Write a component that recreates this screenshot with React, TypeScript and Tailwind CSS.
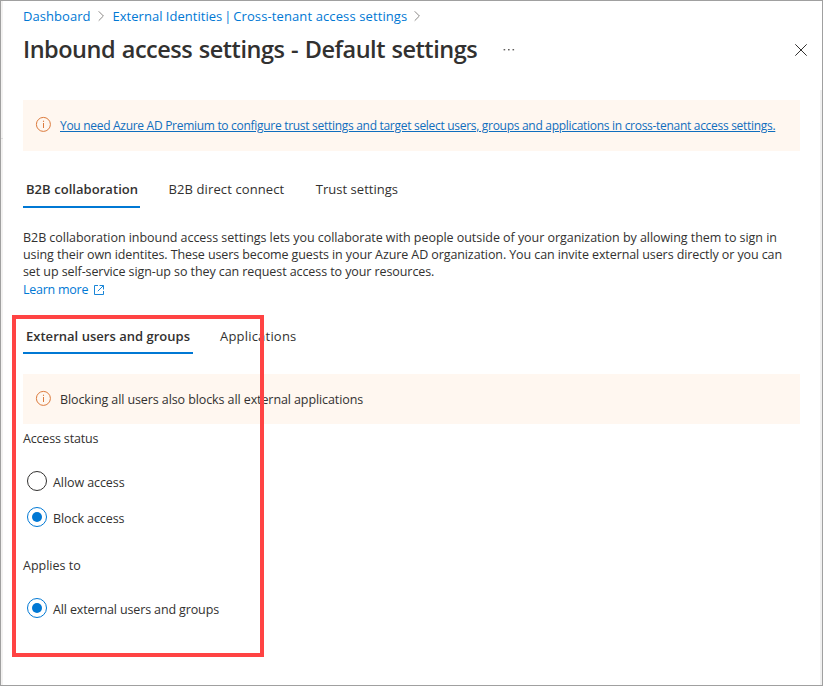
import type { ReactNode } from "react";

function Chevron({ className }: { className: string }) {
  return (
    <svg className={className} width="7" height="12" viewBox="0 0 7 12" fill="none" stroke="#8a8886" strokeWidth="1">
      <path d="M0.7 1.3 L5.4 6 L0.7 10.7" />
    </svg>
  );
}

function InfoIcon() {
  return (
    <svg className="ml-3 shrink-0" width="17" height="17" viewBox="0 0 17 17" fill="none">
      <circle cx="8.4" cy="8.4" r="7" stroke="#dc7a3c" strokeWidth="1" />
      <path d="M8.5 7 V12" stroke="#dc7a3c" strokeWidth="1" />
      <path d="M8.5 4.7 V5.9" stroke="#dc7a3c" strokeWidth="1.1" />
    </svg>
  );
}

function ExternalLinkIcon() {
  return (
    <svg className="ml-[6px]" width="10" height="10" viewBox="0 0 10 10" fill="none" stroke="#0078d4" strokeWidth="0.9">
      <path d="M4 0.5 H0.5 V9.5 H9.5 V6" />
      <path d="M5.5 0.5 H9.5 V4.5 M9.3 0.7 L3.8 6.2" />
    </svg>
  );
}

function Radio({ checked, children }: { checked?: boolean; children: ReactNode }) {
  return (
    <div className="ml-1 flex h-5 items-center">
      <span
        className={
          checked
            ? "flex size-5 items-center justify-center rounded-full border border-[#0078d4]"
            : "flex size-5 items-center justify-center rounded-full border border-[#323130]"
        }
      >
        {checked && <span className="size-[10px] rounded-full bg-[#0078d4]" />}
      </span>
      <span className="mt-1 ml-[6px] leading-[18px]">{children}</span>
    </div>
  );
}

export default function App() {
  return (
    <div className="relative flex h-[686px] w-[823px] border border-[#a0a0a0] bg-white font-['Open_Sans','Noto_Sans',sans-serif] text-[12.5px] whitespace-nowrap text-[#323130]">
      <div className="w-[2px] shrink-0 bg-[#f3f2f1] pt-[137px]">
        <div className="h-px bg-[#dcdcdc]" />
      </div>
      <div className="flex w-[817px] shrink-0 flex-col pt-[6px] pl-5">
        <nav className="flex h-[18px] items-center text-[13px] leading-[18px] text-[#0078d4]">
          <span className="tracking-[0.05px]">Dashboard</span>
          <Chevron className="ml-[7px]" />
          <span className="ml-2 tracking-[0.02px]">
            External Identities<span className="mr-[-1.5px] ml-[-1.5px]"> | </span>
            <span className="tracking-[0.11px]">Cross-tenant access settings</span>
          </span>
          <Chevron className="ml-[7px]" />
        </nav>

        <header className="mt-2 flex h-8 items-center">
          <h1 className="w-[479px] text-[23.5px] leading-8 font-semibold tracking-[-0.49px] [word-spacing:1px]">
            Inbound access settings - Default settings
          </h1>
          <svg className="mt-px" width="13" height="3" viewBox="0 0 13 3" fill="#605e5c">
            <rect x="1.6" y="1" width="1.6" height="1.4" />
            <rect x="6" y="1" width="1.6" height="1.4" />
            <rect x="10.5" y="1" width="1.6" height="1.4" />
          </svg>
          <svg className="mt-[2px] ml-[280px]" width="12" height="12" viewBox="0 0 12 12" stroke="#323130" strokeWidth="1">
            <path d="M0.3 0.3 L11.7 11.7 M11.7 0.3 L0.3 11.7" />
          </svg>
        </header>

        <div className="mt-[35px] flex h-[51px] w-[777px] items-start bg-[#fff7f0] pt-4">
          <InfoIcon />
          <a className="mt-px ml-2 text-[12px] leading-[18px] tracking-[-0.294px] text-[#106ebe] underline underline-offset-1">
            You need Azure AD Premium to configure trust settings and target select users, groups and applications in
            cross-tenant access settings.
          </a>
        </div>

        <div className="mt-[29px] flex h-7 text-[13px] leading-[18px]">
          <div className="w-[117px] border-b-2 border-[#0078d4] pl-[3px] font-semibold tracking-[0.05px]">
            B2B collaboration
          </div>
          <div className="ml-[28.5px] tracking-[0.11px]">B2B direct connect</div>
          <div className="ml-[31.5px] tracking-[0.02px]">Trust settings</div>
        </div>

        <div className="mt-[21px] leading-[17px]">
          <div className="tracking-[-0.047px]">
            B2B collaboration inbound access settings lets you collaborate with people outside of your organization by
            allowing them to sign in
          </div>
          <div className="tracking-[-0.097px]">
            using their own identites. These users become guests in your Azure AD organization. You can invite external
            users directly or you can
          </div>
          <div className="tracking-[-0.086px]">
            set up self-service sign-up so they can request access to your resources.
          </div>
        </div>
        <div className="mt-px flex h-[18px] items-center leading-[18px] text-[#0078d4]">
          <span className="tracking-[-0.25px]">Learn more</span>
          <ExternalLinkIcon />
        </div>

        <div className="mt-[28px] flex h-[27px] text-[13px] leading-[18px]">
          <div className="w-[170px] border-b-2 border-[#0078d4] pl-[3px] font-semibold tracking-[0.02px]">
            External users and groups
          </div>
          <div className="ml-[27px] tracking-[0.2px]">Applications</div>
        </div>

        <div className="mt-5 flex h-[50px] w-[777px] items-start bg-[#fff7f0] pt-4">
          <InfoIcon />
          <span className="mt-px ml-2 leading-[18px] tracking-[-0.095px]">
            Blocking all users also blocks all external applications
          </span>
        </div>

        <div className="mt-[6px] leading-[18px] tracking-[-0.17px]">Access status</div>
        <div className="mt-[23px] flex flex-col gap-4 tracking-[-0.08px]">
          <Radio>Allow access</Radio>
          <Radio checked>Block access</Radio>
        </div>
        <div className="mt-[30px] leading-[18px]">Applies to</div>
        <div className="mt-[23px] tracking-[-0.13px]">
          <Radio checked>All external users and groups</Radio>
        </div>
      </div>
      <div className="mt-[89px] w-[2px] shrink-0 bg-[#f0f0f0]" />

      <div className="absolute top-[314px] left-[11px] h-[342px] w-[252px] border-4 border-[#ff4343]" />
    </div>
  );
}
